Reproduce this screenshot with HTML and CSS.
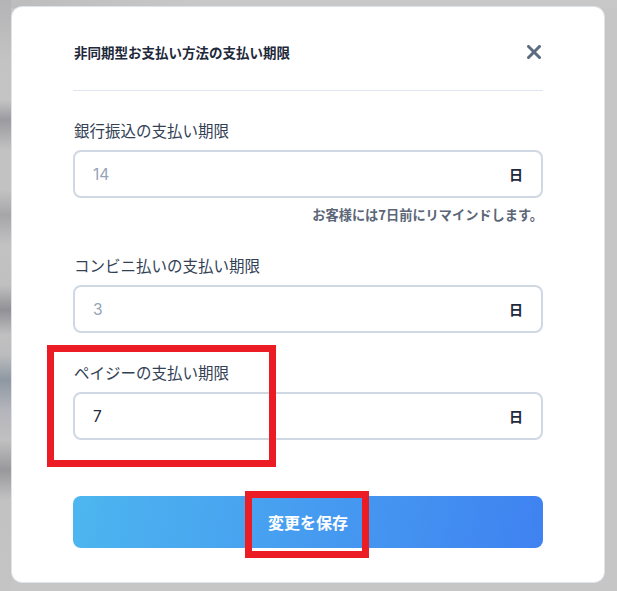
FILE: index.html
```html
<!DOCTYPE html>
<html lang="ja">
<head>
<meta charset="utf-8">
<link rel="stylesheet" href="styles.css">
</head>
<body>
<div class="backdrop">
  <div class="modal">
    <div class="modal-header">
      <h2 class="modal-title">非同期型お支払い方法の支払い期限</h2>
      <button class="close-btn" aria-label="閉じる">
        <svg width="14" height="14" viewBox="0 0 14 14"><path d="M1.5 1.5 L12.5 12.5 M12.5 1.5 L1.5 12.5" stroke="#5b6b80" stroke-width="3" stroke-linecap="square" fill="none"/></svg>
      </button>
    </div>
    <div class="modal-body">
      <div class="field">
        <label class="field-label">銀行振込の支払い期限</label>
        <div class="input-box"><span class="input-value placeholder">14</span><span class="unit">日</span></div>
        <p class="hint">お客様には7日前にリマインドします。</p>
      </div>
      <div class="field field-2">
        <label class="field-label">コンビニ払いの支払い期限</label>
        <div class="input-box"><span class="input-value placeholder">3</span><span class="unit">日</span></div>
      </div>
      <div class="field field-3">
        <label class="field-label">ペイジーの支払い期限</label>
        <div class="input-box"><span class="input-value">7</span><span class="unit">日</span></div>
      </div>
      <button class="save-btn">変更を保存</button>
    </div>
  </div>
</div>
<div class="annot annot-1"></div>
<div class="annot annot-2"></div>
</body>
</html>
```

FILE: styles.css
```css
* { box-sizing: border-box; }
html, body { margin: 0; padding: 0; }
body {
  width: 617px;
  height: 591px;
  overflow: hidden;
  position: relative;
  font-family: Inter, "Noto Sans CJK JP", sans-serif;
  background-color: #c6c6c6;
  background-image:
    linear-gradient(to bottom, #b4b4b6 0px, #c3c3c3 60px, #c4c4c4 100px, #9a9aa0 120px, #c2c2c2 150px, #c2c2c2 190px, #a6a6aa 215px, #c2c2c2 245px, #c0c0c0 285px, #909096 310px, #c0c0c0 335px, #bcbcbe 355px, #8e98a2 380px, #b4b4bc 410px, #c0c0c0 440px, #98989c 470px, #c2c2c2 500px, #c4c4c4 591px),
    linear-gradient(to right, #bcbcbc 0px, #c8c8c8 200px, #c8c8c8 617px);
  background-size: 11px 591px, 617px 8px;
  background-repeat: no-repeat;
  background-position: 0 0, 0 0;
}
.backdrop {
  padding: 6px 12px 8px 11px;
}
.modal {
  width: 594px;
  height: 577px;
  background: #ffffff;
  border: 1px solid #dfe3ea;
  border-radius: 11px;
  padding: 33px 61px 0 61px;
}
.modal-header {
  display: flex;
  align-items: center;
  justify-content: space-between;
  padding-bottom: 26px;
  border-bottom: 1px solid #dde5ee;
}
.modal-title {
  margin: 0;
  font-family: "Noto Sans CJK JP", sans-serif;
  font-size: 13.5px;
  line-height: 24px;
  font-weight: 700;
  color: #1e293b;
  padding-left: 1px;
}
.close-btn {
  border: 0;
  background: none;
  padding: 0;
  margin-right: 2px;
  width: 14px;
  height: 14px;
  display: flex;
}
.modal-body {
  display: flex;
  flex-direction: column;
  padding-top: 28px;
}
.field { display: flex; flex-direction: column; }
.field-2 { margin-top: 30px; }
.field-3 { margin-top: 28px; }
.field-label {
  font-family: "Noto Sans CJK JP", sans-serif;
  font-size: 15.5px;
  line-height: 22px;
  color: #334155;
  padding-left: 1px;
  margin-bottom: 9px;
}
.input-box {
  height: 48px;
  border: 2px solid #cfd8e3;
  border-radius: 8px;
  display: flex;
  align-items: center;
  justify-content: space-between;
  padding: 0 18px 0 18px;
}
.input-value {
  font-family: Inter, "Noto Sans CJK JP", sans-serif;
  font-size: 15.5px;
  color: #1e293b;
}
.input-value.placeholder { color: #94a3b8; }
.unit {
  font-family: "Noto Sans CJK JP", sans-serif;
  font-size: 14px;
  font-weight: 700;
  color: #1e293b;
}
.hint {
  margin: 8px 0 0 0;
  text-align: right;
  font-family: "Noto Sans CJK JP", sans-serif;
  font-size: 13.2px;
  line-height: 18px;
  font-weight: 700;
  color: #5b6677;
}
.save-btn {
  margin-top: 56px;
  height: 52px;
  border: 0;
  border-radius: 8px;
  background: linear-gradient(100deg, #4db6ef 0%, #3f82f1 100%);
  color: #ffffff;
  font-family: "Noto Sans CJK JP", sans-serif;
  font-size: 16px;
  font-weight: 700;
}
.annot {
  position: absolute;
  border: 7px solid #ec1c24;
}
.annot-1 { left: 47px; top: 345px; width: 229px; height: 122px; }
.annot-2 { left: 245px; top: 491px; width: 124px; height: 67px; }
```
